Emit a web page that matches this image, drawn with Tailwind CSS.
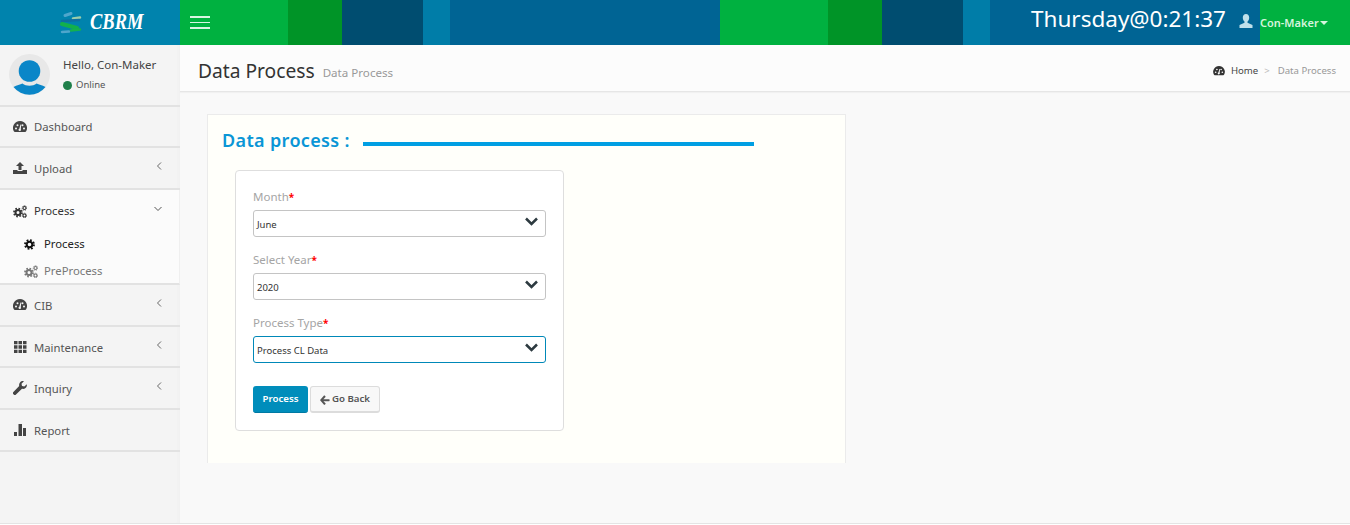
<!DOCTYPE html>
<html>
<head>
<meta charset="utf-8">
<script src="https://cdn.jsdelivr.net/npm/@tailwindcss/browser@4"></script>
</head>
<body class="font-['Noto_Sans',sans-serif] bg-white overflow-hidden">
<div class="w-[1350px] h-[525px] flex flex-col overflow-hidden">
  <header class="h-[45px] flex shrink-0 text-white">
    <div class="w-[180px] bg-[#0083ad] flex items-center pl-[60px] gap-[8px]">
      <svg width="22" height="24" viewBox="0 0 22 24">
        <path d="M5 4.500 L11 2.500" stroke="#4fa6cc" stroke-width="3" stroke-linecap="round"/>
        <path d="M13 7.500 L20 6.500" stroke="#9ccdaa" stroke-width="2.500" stroke-linecap="round"/>
        <path d="M2 10 L19 9" stroke="#0d6fa0" stroke-width="2.500" stroke-linecap="round"/>
        <path d="M2 13 L17 17" stroke="#12b04c" stroke-width="4" stroke-linecap="round"/>
        <path d="M2 21 L9 20.500" stroke="#4fa6cc" stroke-width="2.500" stroke-linecap="round"/>
        <path d="M11 19.500 L20 18.500" stroke="#14b050" stroke-width="2.500" stroke-linecap="round"/>
      </svg>
      <span class="font-['Liberation_Serif',serif] italic font-bold text-[18.5px] scale-y-[1.2] leading-none">CBRM</span>
    </div>
    <div class="w-[108px] bg-[#00b140] flex items-center pl-[10px]">
      <div class="w-5 flex flex-col gap-[4px]">
        <div class="h-[2px] bg-[#d9f5e2]"></div><div class="h-[1px] bg-[#d9f5e2]"></div><div class="h-[2px] bg-[#d9f5e2]"></div>
      </div>
    </div>
    <div class="w-[54px] bg-[#009427]"></div>
    <div class="w-[81px] bg-[#004d70]"></div>
    <div class="w-[27px] bg-[#007da8]"></div>
    <div class="w-[270px] bg-[#006494]"></div>
    <div class="w-[108px] bg-[#00b140]"></div>
    <div class="w-[54px] bg-[#009427]"></div>
    <div class="w-[81px] bg-[#004d70]"></div>
    <div class="w-[27px] bg-[#007da8]"></div>
    <div class="w-[270px] bg-[#006494] flex items-start justify-end">
      <span class="text-[22.5px] leading-[38px] mr-[13px]">Thursday@0:21:37</span>
      <svg class="mt-[14px] mr-[7px]" width="14" height="14" viewBox="0 0 14 14" fill="#bfe0ea"><path d="M7 0c2 0 3.200 1.500 3.200 3.600C10.200 5.600 9.300 7 8.500 7.600v1.100L13.500 11v3H.500v-3l5-2.300V7.600C4.700 7 3.800 5.600 3.800 3.600 3.800 1.500 5 0 7 0z"/></svg>
    </div>
    <div class="w-[90px] bg-[#00b140] flex items-start text-[#d5f5dd] text-[11px] font-semibold leading-[45px]">
      <span>Con-Maker</span><span class="mt-[21px] ml-[1px] w-0 h-0 border-x-[4px] border-x-transparent border-t-[4px] border-t-[#d5f5dd]"></span>
    </div>
  </header>

  <div class="flex flex-1 min-h-0 bg-[#f9f9f9] border-b border-b-[#e4e4e4] mb-px">
    <aside class="w-[180px] shrink-0 bg-[#f4f4f4] text-[11.3px] text-[#555] shadow-[inset_-3px_0_2px_rgba(0,0,0,0.012)]">
      <div class="h-[62px] flex border-b-2 border-[#e2e2e2]">
        <svg class="ml-[9px] mt-[9px] shrink-0" width="41" height="41" viewBox="0 0 41 41">
          <circle cx="20.500" cy="20.500" r="20.500" fill="#e8e8e8"/>
          <circle cx="20.500" cy="17" r="10.800" fill="#0a86c8"/>
          <path d="M4.500 33C8 31 11 30.500 13.500 29.500C17 32.500 24 32.500 27.500 29.500C30 30.500 33 31 36.500 33A20.500 20.500 0 0 1 4.500 33z" fill="#0a86c8"/>
        </svg>
        <div class="ml-[13px] pt-[11px]">
          <div class="text-[#444] text-[11.5px] leading-[18px]">Hello, Con-Maker</div>
          <div class="flex items-center gap-[4px] text-[9.5px] mt-[4px] leading-[14px] text-[#555]"><span class="w-[9px] h-[9px] rounded-full bg-[#1f7f4a]"></span>Online</div>
        </div>
      </div>

      <a class="h-[41px] flex items-center pl-[13px] gap-[7px] border-b-2 border-[#e2e2e2]">
        <svg width="14" height="12" viewBox="0 0 14 12" fill="#444"><path d="M7 0a7 7 0 0 0-6 10.600c.2.300.5.400.8.400h10.400c.3 0 .6-.1.800-.4A7 7 0 0 0 7 0zM3 8.500a1 1 0 1 1 0-2 1 1 0 0 1 0 2zm1.500-3.300a1 1 0 1 1 0-2 1 1 0 0 1 0 2zM7.800 8.300a1.200 1.200 0 1 1-1.500-.6L7.500 3.500h.7l-.4 4.800zM9.500 5.200a1 1 0 1 1 0-2 1 1 0 0 1 0 2zm1.500 3.300a1 1 0 1 1 0-2 1 1 0 0 1 0 2z"/></svg>
        <span class="pt-[1px]">Dashboard</span>
      </a>
      <a class="h-[42px] flex items-center pl-[13px] gap-[7px] border-b-2 border-[#e2e2e2]">
        <svg width="14" height="12" viewBox="0 0 14 12" fill="#444"><path d="M7 0l4 4H8.500v4h-3V4H3zM0 8h4.500v1h5V8H14v4H0z"/></svg>
        <span class="pt-[2px]">Upload</span>
        <svg class="ml-auto mr-[18px] -mt-[4px]" width="6" height="8" viewBox="0 0 6 8" fill="none" stroke="#666"><path d="M5 .5L1.500 4 5 7.500"/></svg>
      </a>

      <div class="h-[95px] bg-[#fbfbfb] border-b-2 border-[#e2e2e2] text-[#333] border-r border-r-[#efefef]">
        <div class="h-[42px] flex items-center pl-[13px] gap-[7px]">
          <svg width="14" height="13" viewBox="0 0 14 13" fill="none" stroke="#333"><circle cx="5" cy="7.500" r="2.500" stroke-width="2"/><circle cx="5" cy="7.500" r="4" stroke-width="1.800" stroke-dasharray="1.600 1.540"/><circle cx="11.500" cy="3" r="1.500" stroke-width="1.100"/><circle cx="11.500" cy="3" r="2.300" stroke-width=".8" stroke-dasharray="1 .8"/><circle cx="11.500" cy="10.500" r="1.500" stroke-width="1.100"/><circle cx="11.500" cy="10.500" r="2.300" stroke-width=".8" stroke-dasharray="1 .8"/></svg>
          <span class="pt-[1px]">Process</span>
          <svg class="ml-auto mr-[17px] -mt-[4px]" width="8" height="6" viewBox="0 0 8 6" fill="none" stroke="#555"><path d="M.5 1L4 4.500 7.500 1"/></svg>
        </div>
        <div class="h-[27px] -mt-[1px] flex items-center pl-[24px] gap-[9px] text-[#222]">
          <svg width="11" height="11" viewBox="0 0 11 11" fill="none" stroke="#111"><circle cx="5.500" cy="5.500" r="2.800" stroke-width="2"/><circle cx="5.500" cy="5.500" r="4.400" stroke-width="2" stroke-dasharray="1.800 1.655"/></svg>
          <span>Process</span>
        </div>
        <div class="h-[27px] flex items-center pl-[24px] gap-[6px] text-[#777]">
          <svg width="14" height="13" viewBox="0 0 14 13" fill="none" stroke="#777"><circle cx="5" cy="7.500" r="2.500" stroke-width="2"/><circle cx="5" cy="7.500" r="4" stroke-width="1.800" stroke-dasharray="1.600 1.540"/><circle cx="11.500" cy="3" r="1.500" stroke-width="1.100"/><circle cx="11.500" cy="3" r="2.300" stroke-width=".8" stroke-dasharray="1 .8"/><circle cx="11.500" cy="10.500" r="1.500" stroke-width="1.100"/><circle cx="11.500" cy="10.500" r="2.300" stroke-width=".8" stroke-dasharray="1 .8"/></svg>
          <span>PreProcess</span>
        </div>
      </div>

      <a class="h-[42px] flex items-center pl-[13px] gap-[7px] border-b-2 border-[#e2e2e2]">
        <svg width="14" height="12" viewBox="0 0 14 12" fill="#444"><path d="M7 0a7 7 0 0 0-6 10.600c.2.300.5.400.8.400h10.400c.3 0 .6-.1.800-.4A7 7 0 0 0 7 0zM3 8.500a1 1 0 1 1 0-2 1 1 0 0 1 0 2zm1.500-3.300a1 1 0 1 1 0-2 1 1 0 0 1 0 2zM7.800 8.300a1.200 1.200 0 1 1-1.500-.6L7.500 3.500h.7l-.4 4.800zM9.500 5.200a1 1 0 1 1 0-2 1 1 0 0 1 0 2zm1.500 3.300a1 1 0 1 1 0-2 1 1 0 0 1 0 2z"/></svg>
        <span class="pt-[2px]">CIB</span>
        <svg class="ml-auto mr-[18px] -mt-[4px]" width="6" height="8" viewBox="0 0 6 8" fill="none" stroke="#666"><path d="M5 .5L1.500 4 5 7.500"/></svg>
      </a>
      <a class="h-[41px] flex items-center pl-[13px] gap-[7px] border-b-2 border-[#e2e2e2]">
        <svg width="14" height="12" viewBox="0 0 14 12" fill="#444"><path d="M1 0h3.500v3.300H1zM5.500 0H9v3.300H5.500zM10 0h3.500v3.300H10zM1 4.300h3.500v3.400H1zM5.500 4.300H9v3.400H5.500zM10 4.300h3.500v3.400H10zM1 8.700h3.500V12H1zM5.500 8.700H9V12H5.500zM10 8.700h3.500V12H10z"/></svg>
        <span class="pt-[3px]">Maintenance</span>
        <svg class="ml-auto mr-[18px] -mt-[4px]" width="6" height="8" viewBox="0 0 6 8" fill="none" stroke="#666"><path d="M5 .5L1.500 4 5 7.500"/></svg>
      </a>
      <a class="h-[42px] flex items-center pl-[13px] gap-[7px] border-b-2 border-[#e2e2e2]">
        <svg width="14" height="14" viewBox="0 0 14 14" fill="#444"><path d="M13.800 3.200c.3 1.500-.2 3-1.300 3.900-1 .8-2.300 1-3.500.7L3 13.600a1.500 1.500 0 0 1-2.200 0l-.4-.4a1.500 1.500 0 0 1 0-2.200L6.200 5C5.900 3.800 6.100 2.500 7 1.500 8 .400 9.500-.1 10.900.2L8.500 2.700l.5 2.300 2.300.5z"/></svg>
        <span class="pt-[2px]">Inquiry</span>
        <svg class="ml-auto mr-[18px] -mt-[4px]" width="6" height="8" viewBox="0 0 6 8" fill="none" stroke="#666"><path d="M5 .5L1.500 4 5 7.500"/></svg>
      </a>
      <a class="h-[42px] flex items-center pl-[13px] gap-[7px] border-b-2 border-[#e2e2e2]">
        <svg width="14" height="12" viewBox="0 0 14 12" fill="#444"><path d="M1 8h3v4H1zM5.500 0h3.500v12H5.500zM10 4h3v8h-3z"/></svg>
        <span class="pt-[2px]">Report</span>
      </a>
    </aside>

    <main class="flex-1 min-w-0 flex flex-col">
      <div class="h-[47px] shrink-0 bg-[#fcfcfc] border-b border-b-[#e6e6e6] shadow-[0_1px_1px_rgba(0,0,0,0.03)] flex items-center pl-[18px] pr-[14px] pt-[6px]">
        <h1 class="text-[19.2px] text-[#333] leading-none">Data Process</h1>
        <span class="ml-[8px] mt-[3px] text-[11.6px] text-[#999]">Data Process</span>
        <div class="ml-auto flex items-center text-[9.6px] text-[#444] pt-[1px]">
          <svg class="mr-[6px]" width="12" height="10" viewBox="0 0 14 12" fill="#333"><path d="M7 0a7 7 0 0 0-6 10.600c.2.300.5.400.8.400h10.400c.3 0 .6-.1.800-.4A7 7 0 0 0 7 0zM3 8.500a1 1 0 1 1 0-2 1 1 0 0 1 0 2zm1.500-3.300a1 1 0 1 1 0-2 1 1 0 0 1 0 2zM7.800 8.300a1.200 1.200 0 1 1-1.500-.6L7.500 3.500h.7l-.4 4.800zM9.500 5.200a1 1 0 1 1 0-2 1 1 0 0 1 0 2zm1.500 3.300a1 1 0 1 1 0-2 1 1 0 0 1 0 2z"/></svg>
          <span>Home</span><span class="ml-[6px] mr-[8px] text-[#bbb]">&gt;</span><span class="text-[#999]">Data Process</span>
        </div>
      </div>

      <div class="pl-[27px] pt-[22px]">
        <section class="w-[639px] h-[349px] bg-[#fffffa] border-t border-l border-r border-[#ebebeb] pl-[14px] pt-[13px]">
          <div class="flex items-center">
            <h2 class="text-[18px] font-semibold text-[#0a96d6] tracking-[0.35px] leading-[25px]">Data process :</h2>
            <div class="w-[391px] h-1 bg-[#009fe3] ml-[13px] mt-[7px]"></div>
          </div>
          <div class="ml-[13px] mt-[17px] w-[329px] h-[261px] bg-white border border-[#dedede] rounded-[4px] pl-[17px] pt-[16px]">
            <label class="block h-[19px] text-[11.5px] text-[#a5a5a5] leading-[19px]">Month<span class="text-[#f00] font-bold text-[10px]">*</span></label>
            <div class="w-[293px] h-[27px] mt-[4px] border border-[#c4c4c4] rounded-[3px] bg-white flex items-center pl-[3px] pr-[7px] text-[9.5px] text-[#333]">
              <span class="pt-[3px]">June</span>
              <svg class="ml-auto -mt-[4px]" width="13" height="9" viewBox="0 0 13 9" fill="none" stroke="#2d3a40" stroke-width="2.500"><path d="M1 1.500L6.500 7 12 1.500"/></svg>
            </div>
            <label class="block h-[19px] text-[11.5px] text-[#a5a5a5] leading-[19px] mt-[13px]">Select Year<span class="text-[#f00] font-bold text-[10px]">*</span></label>
            <div class="w-[293px] h-[27px] mt-[4px] border border-[#c4c4c4] rounded-[3px] bg-white flex items-center pl-[3px] pr-[7px] text-[9.5px] text-[#333]">
              <span class="pt-[3px]">2020</span>
              <svg class="ml-auto -mt-[4px]" width="13" height="9" viewBox="0 0 13 9" fill="none" stroke="#2d3a40" stroke-width="2.500"><path d="M1 1.500L6.500 7 12 1.500"/></svg>
            </div>
            <label class="block h-[20px] text-[11.5px] text-[#a5a5a5] leading-[20px] mt-[13px]">Process Type<span class="text-[#f00] font-bold text-[10px]">*</span></label>
            <div class="w-[293px] h-[27px] mt-[3px] border border-[#0088b8] rounded-[3px] bg-white flex items-center pl-[3px] pr-[7px] text-[9.5px] text-[#333]">
              <span class="pt-[3px]">Process CL Data</span>
              <svg class="ml-auto -mt-[4px]" width="13" height="9" viewBox="0 0 13 9" fill="none" stroke="#2d3a40" stroke-width="2.500"><path d="M1 1.500L6.500 7 12 1.500"/></svg>
            </div>
            <div class="flex gap-[2px] mt-[23px]">
              <button class="w-[55px] h-[27px] rounded-[3px] bg-[#008dbb] border-b border-[#0079a3] text-white text-[9.7px] font-semibold pt-[1px]">Process</button>
              <button class="w-[70px] h-[27px] rounded-[3px] bg-[#f8f8f8] border border-[#dcdcdc] border-b-2 text-[#555] text-[9.7px] font-semibold flex items-center justify-center gap-[2px] pt-[1px]">
                <svg width="10" height="10" viewBox="0 0 10 10" fill="#555"><path d="M4.700.6l.8.8c.2.200.2.500 0 .7L3.400 4.200h5.700c.3 0 .5.200.5.500v1c0 .3-.2.500-.5.500H3.400l2.100 2.100c.2.200.2.500 0 .7l-.8.8c-.2.200-.5.200-.7 0L.3 5.500c-.2-.2-.2-.5 0-.7L4 .6c.2-.2.500-.2.700 0z"/></svg>
                Go Back
              </button>
            </div>
          </div>
        </section>
      </div>
    </main>
  </div>
</div>
</body>
</html>
